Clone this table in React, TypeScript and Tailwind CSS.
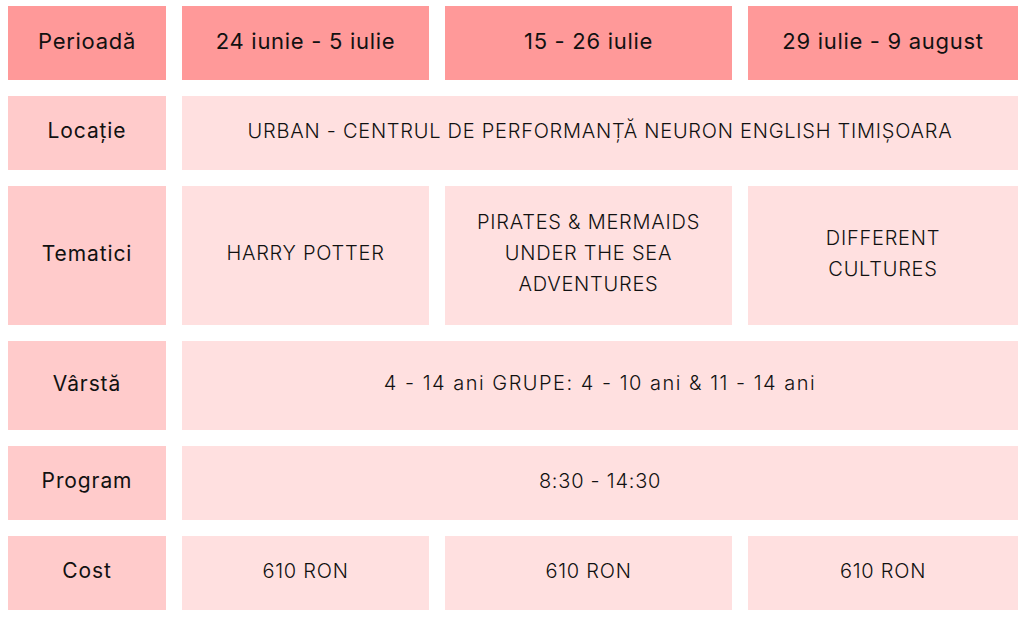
import React from 'react';

const font = { fontFamily: 'Inter, "Noto Sans", sans-serif' };

const Head: React.FC<{ children: React.ReactNode }> = ({ children }) => (
  <div className="flex items-center justify-center bg-[#ff9999] pb-1 text-[22px] font-normal tracking-[0.7px] text-[#111]">
    {children}
  </div>
);

const Label: React.FC<{ children: React.ReactNode }> = ({ children }) => (
  <div className="flex items-center justify-center bg-[#ffcbcb] pb-1 text-[21px] font-normal tracking-[0.9px] text-[#111]">
    {children}
  </div>
);

const Cell: React.FC<{ children: React.ReactNode; span?: boolean }> = ({ children, span }) => (
  <div
    className={
      (span ? 'col-span-3 ' : '') +
      'flex items-center justify-center bg-[#ffe0e0] px-4 pb-1 text-center text-[20px] font-light uppercase leading-[31px] tracking-[0.75px] text-[#111]'
    }
  >
    {children}
  </div>
);

const App: React.FC = () => {
  return (
    <div className="h-[617px] w-[1030px] bg-white pl-2 pt-[6px]" style={font}>
      <div className="grid grid-cols-[158px_247px_287px_270px] grid-rows-[74px_74px_139px_89px_74px_74px] gap-4">
        <Head>Perioadă</Head>
        <Head>24 iunie - 5 iulie</Head>
        <Head>15 - 26 iulie</Head>
        <Head>29 iulie - 9 august</Head>

        <Label>Locație</Label>
        <Cell span>URBAN - CENTRUL DE PERFORMANȚĂ NEURON ENGLISH TIMIȘOARA</Cell>

        <Label>Tematici</Label>
        <Cell>HARRY POTTER</Cell>
        <Cell>
          PIRATES &amp; MERMAIDS
          <br />
          UNDER THE SEA
          <br />
          ADVENTURES
        </Cell>
        <Cell>
          DIFFERENT
          <br />
          CULTURES
        </Cell>

        <Label>Vârstă</Label>
        <Cell span>
          <span className="normal-case tracking-[1.5px]">4 - 14 ani GRUPE: 4 - 10 ani &amp; 11 - 14 ani</span>
        </Cell>

        <Label>Program</Label>
        <Cell span>8:30 - 14:30</Cell>

        <Label>Cost</Label>
        <Cell>610 RON</Cell>
        <Cell>610 RON</Cell>
        <Cell>610 RON</Cell>
      </div>
    </div>
  );
};

export default App;
